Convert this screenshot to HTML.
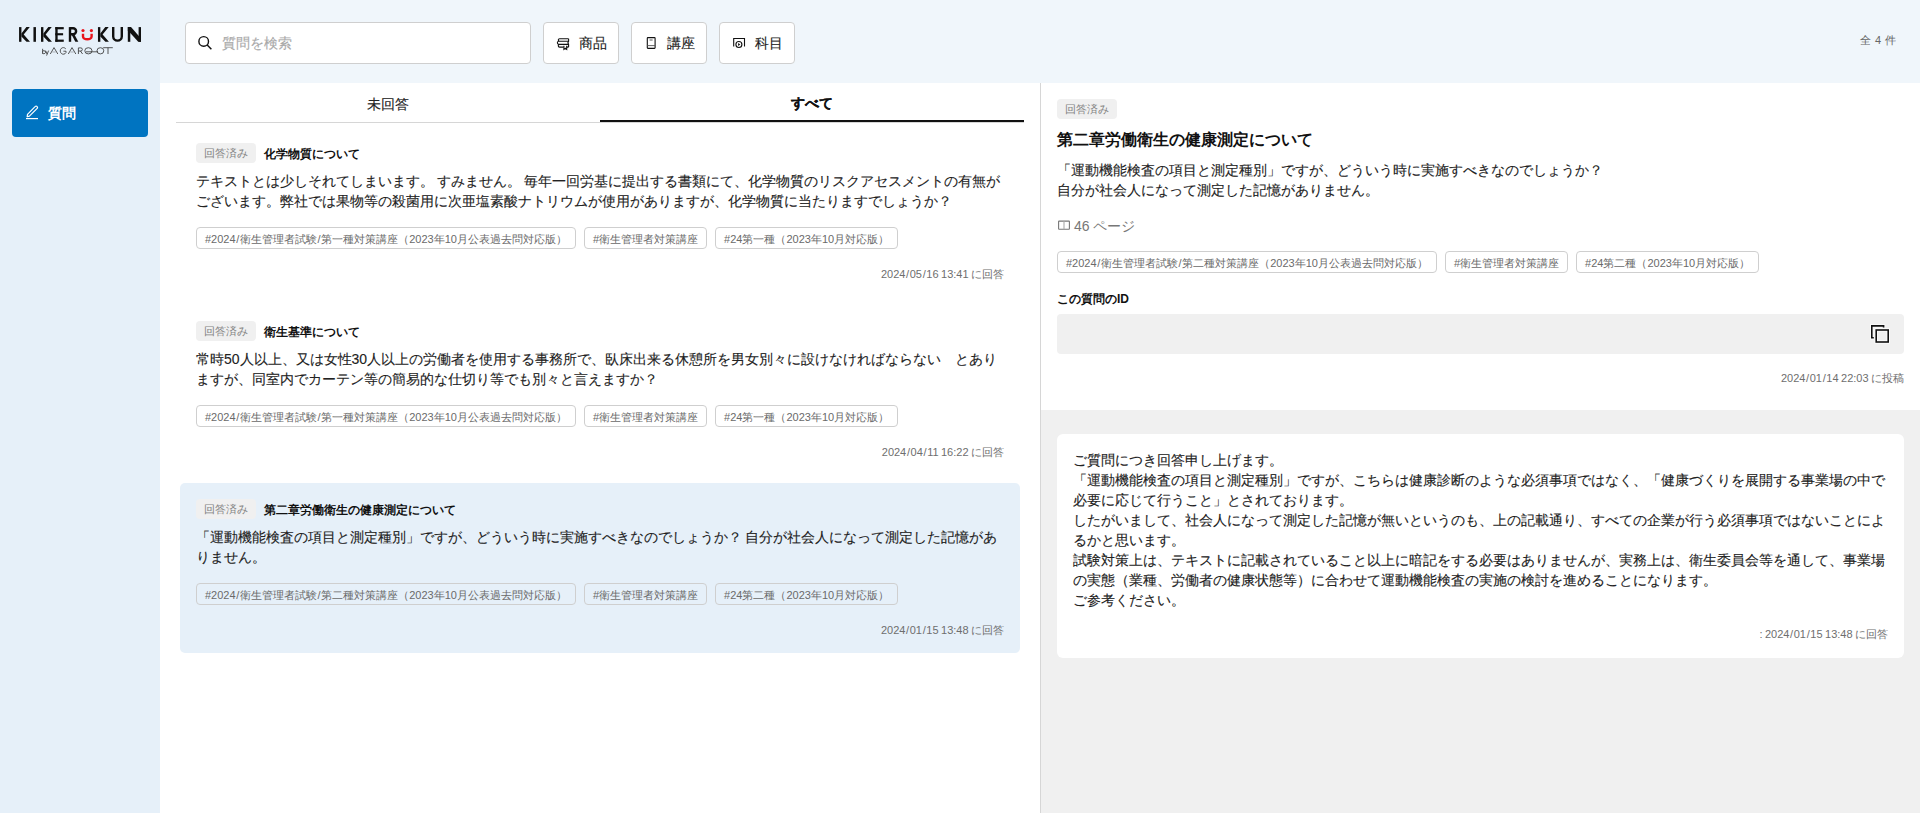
<!DOCTYPE html>
<html lang="ja">
<head>
<meta charset="utf-8">
<style>
*{box-sizing:border-box;margin:0;padding:0;word-spacing:-0.054em}
.s{font-style:normal;margin:0 0.057em}
html,body{width:1920px;height:813px;overflow:hidden;background:#fff}
body{font-family:"Liberation Sans",sans-serif;color:#222;position:relative}
.side{position:absolute;left:0;top:0;width:160px;height:813px;background:#e6f0f9}
.logo{position:absolute;left:15px;top:22px;width:130px;height:36px}
.navbtn{position:absolute;left:12px;top:89px;width:136px;height:48px;background:#0074c1;border-radius:4px;color:#fff}
.navbtn svg{position:absolute;left:24px;top:104px}
.navbtn .t{position:absolute;left:36px;top:14px;font-size:14px;font-weight:bold;line-height:20px}
.head{position:absolute;left:160px;top:0;width:1760px;height:83px;background:#f0f6fb}
.search{position:absolute;left:25px;top:22px;width:346px;height:42px;background:#fff;border:1px solid #cfcfcf;border-radius:4px}
.search svg{position:absolute;left:12px;top:13px}
.search .ph{position:absolute;left:36px;top:10px;font-size:14px;line-height:20px;color:#a9a9a9}
.fbtn{position:absolute;top:22px;height:42px;width:76px;background:#fff;border:1px solid #cfcfcf;border-radius:4px}
.fbtn svg{position:absolute;left:13px;top:15px}
.fbtn .t{position:absolute;left:35px;top:10px;font-size:14px;line-height:20px;color:#222}
.count{position:absolute;right:23px;top:32px;font-size:11px;line-height:16px;color:#666;letter-spacing:0.8px}
.left{position:absolute;left:160px;top:83px;width:880px;height:730px;background:#fff}
.tabs{position:absolute;left:16px;top:0;width:848px;height:40px;border-bottom:1px solid #d6d6d6}
.tab{position:absolute;top:0;width:424px;height:39px;text-align:center;font-size:14px;line-height:20px;padding-top:11px;color:#222}
.tab.on{font-weight:bold;color:#111;padding-top:10px}
.tab.on:after{content:"";position:absolute;left:0;right:0;bottom:0;height:2px;background:#111}
.item{position:absolute;left:20px;width:840px;height:170px;border-radius:5px;padding:16px}
.item.sel{background:#e6f0f9}
.row{display:flex;align-items:center;height:20px}
.badge{display:inline-block;height:20px;line-height:20px;padding:0 8px;background:#f0f0f0;border-radius:4px;font-size:11px;color:#828282}
.ttl{position:relative;top:1px;margin-left:8px;font-size:12px;font-weight:bold;line-height:20px;color:#111}
.body{margin-top:8px;font-size:14px;line-height:20px;color:#222}
.tags{margin-top:16px;display:flex;gap:8px;height:22px}
.tag{height:22px;line-height:18px;padding-top:2px !important;border:1px solid #cfcfcf;border-radius:4px;padding:0 8px;font-size:11px;color:#6a6a6a;white-space:nowrap}
.date{margin-top:18px;text-align:right;font-size:11px;line-height:15px;color:#6e6e6e}
.right{position:absolute;left:1040px;top:83px;width:880px;height:730px;background:#f0f0f0;border-left:1px solid #d6d6d6}
.qa{position:absolute;left:0;top:0;width:879px;height:327px;background:#fff;padding:16px}
.rttl{margin-top:9px;font-size:16px;font-weight:bold;line-height:24px;color:#111}
.rbody{margin-top:8px;font-size:14px;line-height:20px;color:#222}
.page{margin-top:16px;padding-left:17px;font-size:14px;line-height:20px;color:#777;display:flex;align-items:center;gap:5px}
.rtags{margin-top:15px;display:flex;gap:8px;height:22px}
.idl{margin-top:17px;font-size:12px;font-weight:bold;line-height:18px;color:#111}
.idbox{margin-top:6px;height:40px;background:#f0f0f0;border-radius:4px;position:relative}
.idbox svg{position:absolute;right:14px;top:11px}
.rdate{margin-top:17px;text-align:right;font-size:11px;line-height:15px;color:#6e6e6e}
.ans{position:absolute;left:16px;top:351px;width:847px;height:224px;background:#fff;border-radius:6px;padding:16px}
.atext{margin-top:0px;font-size:14px;line-height:20px;color:#222}
.ov{position:absolute;left:0;top:0;z-index:10}
.body,.rbody,.atext,.tab,.fbtn .t,.search .ph{-webkit-text-stroke:0.12px currentColor}
.adate{margin-top:17px;text-align:right;font-size:11px;line-height:15px;color:#6e6e6e}
</style>
</head>
<body>
<div class="side">
    <div class="navbtn"><span class="t">質問</span></div>
</div>
<div class="head">
  <div class="search"><span class="ph">質問を検索</span></div>
  <div class="fbtn" style="left:383px"><span class="t">商品</span></div>
  <div class="fbtn" style="left:471px"><span class="t">講座</span></div>
  <div class="fbtn" style="left:559px"><span class="t">科目</span></div>
  <div class="count">全 4 件</div>
</div>
<div class="left">
  <div class="tabs">
    <div class="tab" style="left:0">未回答</div>
    <div class="tab on" style="left:424px">すべて</div>
  </div>
  <div class="item" style="top:44px">
    <div class="row"><span class="badge">回答済み</span><span class="ttl">化学物質について</span></div>
    <div class="body">テキストとは少しそれてしまいます。 すみません。 毎年一回労基に提出する書類にて、化学物質のリスクアセスメントの有無がございます。弊社では果物等の殺菌用に次亜塩素酸ナトリウムが使用がありますが、化学物質に当たりますでしょうか？</div>
    <div class="tags"><span class="tag">#2024<i class="s">/</i>衛生管理者試験<i class="s">/</i>第一種対策講座（2023年10月公表過去問対応版）</span><span class="tag">#衛生管理者対策講座</span><span class="tag">#24第一種（2023年10月対応版）</span></div>
    <div class="date">2024<i class="s">/</i>05<i class="s">/</i>16 13:41 に回答</div>
  </div>
  <div class="item" style="top:222px">
    <div class="row"><span class="badge">回答済み</span><span class="ttl">衛生基準について</span></div>
    <div class="body">常時50人以上、又は女性30人以上の労働者を使用する事務所で、臥床出来る休憩所を男女別々に設けなければならない　とありますが、同室内でカーテン等の簡易的な仕切り等でも別々と言えますか？</div>
    <div class="tags"><span class="tag">#2024<i class="s">/</i>衛生管理者試験<i class="s">/</i>第一種対策講座（2023年10月公表過去問対応版）</span><span class="tag">#衛生管理者対策講座</span><span class="tag">#24第一種（2023年10月対応版）</span></div>
    <div class="date">2024<i class="s">/</i>04<i class="s">/</i>11 16:22 に回答</div>
  </div>
  <div class="item sel" style="top:400px">
    <div class="row"><span class="badge">回答済み</span><span class="ttl">第二章労働衛生の健康測定について</span></div>
    <div class="body">「運動機能検査の項目と測定種別」ですが、どういう時に実施すべきなのでしょうか？ 自分が社会人になって測定した記憶がありません。</div>
    <div class="tags"><span class="tag">#2024<i class="s">/</i>衛生管理者試験<i class="s">/</i>第二種対策講座（2023年10月公表過去問対応版）</span><span class="tag">#衛生管理者対策講座</span><span class="tag">#24第二種（2023年10月対応版）</span></div>
    <div class="date">2024<i class="s">/</i>01<i class="s">/</i>15 13:48 に回答</div>
  </div>
</div>
<div class="right">
  <div class="qa">
    <div class="row"><span class="badge">回答済み</span></div>
    <div class="rttl">第二章労働衛生の健康測定について</div>
    <div class="rbody">「運動機能検査の項目と測定種別」ですが、どういう時に実施すべきなのでしょうか？<br>自分が社会人になって測定した記憶がありません。</div>
    <div class="page"><span>46 ページ</span></div>
    <div class="rtags"><span class="tag">#2024<i class="s">/</i>衛生管理者試験<i class="s">/</i>第二種対策講座（2023年10月公表過去問対応版）</span><span class="tag">#衛生管理者対策講座</span><span class="tag">#24第二種（2023年10月対応版）</span></div>
    <div class="idl">この質問のID</div>
    <div class="idbox"></div>
    <div class="rdate">2024<i class="s">/</i>01<i class="s">/</i>14 22:03 に投稿</div>
  </div>
  <div class="ans">
    <div class="atext">ご質問につき回答申し上げます。<br>「運動機能検査の項目と測定種別」ですが、こちらは健康診断のような必須事項ではなく、「健康づくりを展開する事業場の中で必要に応じて行うこと」とされております。<br>したがいまして、社会人になって測定した記憶が無いというのも、上の記載通り、すべての企業が行う必須事項ではないことによるかと思います。<br>試験対策上は、テキストに記載されていること以上に暗記をする必要はありませんが、実務上は、衛生委員会等を通して、事業場の実態（業種、労働者の健康状態等）に合わせて運動機能検査の実施の検討を進めることになります。<br>ご参考ください。</div>
    <div class="adate">: 2024<i class="s">/</i>01<i class="s">/</i>15 13:48 に回答</div>
  </div>
</div>
<svg class="ov" width="1920" height="813" viewBox="0 0 1920 813">
<g fill="#111">
<rect x="19.06" y="27.1" width="2.37" height="14.7"/>
<path d="M21.4 33.4 L26.4 27.1 L29.8 27.1 L23.7 34.6 L30 41.8 L26.5 41.8 L21.4 36.6 Z"/>
<rect x="33.45" y="27.1" width="2.5" height="14.7"/>
<g transform="translate(21.95 0)"><rect x="19.06" y="27.1" width="2.37" height="14.7"/><path d="M21.4 33.4 L26.4 27.1 L29.8 27.1 L23.7 34.6 L30 41.8 L26.5 41.8 L21.4 36.6 Z"/></g>
<rect x="55.3" y="27.1" width="2.35" height="14.7"/>
<rect x="55.3" y="27.1" width="8.45" height="2.2"/>
<rect x="55.3" y="33.2" width="7.8" height="2.1"/>
<rect x="55.3" y="39.6" width="8.45" height="2.2"/>
<rect x="68.8" y="27.1" width="2.4" height="14.7"/>
<path d="M71.8 35.0 L74.7 35.0 L78.3 41.8 L75.3 41.8 Z"/>
<g transform="translate(78.9 0)"><rect x="19.06" y="27.1" width="2.37" height="14.7"/><path d="M21.4 33.4 L26.4 27.1 L29.8 27.1 L23.7 34.6 L30 41.8 L26.5 41.8 L21.4 36.6 Z"/></g>
<rect x="127.8" y="27.1" width="2.5" height="14.7"/>
<rect x="138.6" y="27.1" width="2.4" height="14.7"/>
<path d="M127.8 27.1 L131 27.1 L141 38.4 L141 41.8 L138.2 41.8 L127.8 30.3 Z"/>
</g>
<g fill="none" stroke="#111" stroke-width="2.4">
<path d="M70 28.3 H73.1 A3 3 0 0 1 73.1 34.3 H70"/>
<path d="M113.2 27.1 V36.5 A4.3 4.1 0 0 0 121.8 36.5 V27.1"/>
</g>
<g fill="#e8141c"><circle cx="83" cy="30.5" r="1.6"/><circle cx="91.4" cy="30.6" r="1.6"/></g>
<path d="M83 33.8 V36.4 A4.3 2.9 0 0 0 91.6 36.4 V33.8" fill="none" stroke="#e8141c" stroke-width="2.4"/>
<g fill="none" stroke="#3a3a3a" stroke-width="0.85">
<path d="M42.6 48.8 V53.9 M42.6 51.8 A1.5 1.5 0 1 1 42.6 52.6"/>
<path d="M45.6 50.6 L47 54 M48.6 50.6 L46.6 55.6"/>
<path d="M50.3 54 L54 47.6 L57.8 54"/>
<path d="M65.8 48.9 A3.1 3.3 0 1 0 66 52.6 V51.2 H63.4"/>
<path d="M68.3 54 L72 47.6 L75.8 54"/>
<path d="M78.4 54 V47.9 H80.8 A1.55 1.55 0 0 1 80.8 51 H78.4 M80.4 51 L82.6 54"/>
<ellipse cx="88.4" cy="50.8" rx="3.6" ry="3.1"/>
<ellipse cx="100.4" cy="50.8" rx="3.4" ry="3.1"/>
<path d="M86 51.8 H98 M103.2 47.7 H112.8 M108 47.7 V54"/>
<path d="M52.4 52 H55.6 M70.4 52 H73.6" stroke-width="0.7" opacity="0.5"/>
</g>
<g fill="none" stroke="#fff" stroke-width="1.2" stroke-linejoin="round">
<path d="M27.2 116.8 L27.5 114.3 L35.3 106.4 A1.1 1.1 0 0 1 36.9 106.4 L37.2 106.7 A1.1 1.1 0 0 1 37.2 108.3 L29.4 116.1 Z"/>
<path d="M26 118.6 H38"/>
</g>
<g fill="none" stroke="#111" stroke-width="1.4">
<circle cx="203.7" cy="41.4" r="4.8"/>
<path d="M207.2 44.9 L211.4 49.3"/>
</g>
<g fill="none" stroke="#111" stroke-width="1.1">
<path d="M568.6 38.7 H559.6 A1.3 1.3 0 0 0 559.6 41.3 H568.3 M567.9 41.3 H558.9 A1.55 1.55 0 0 0 558.9 44.4 H568.3 M568.6 44.4 H559.6 A1.35 1.35 0 0 0 559.6 47.1 H563.6 M566.8 47.1 H568.6 M568.6 38.7 V41.3 L567.9 42.85 L568.6 44.4 V47.1"/>
<path d="M563.9 45.8 V49.4 L565.3 48.3 L566.7 49.4 V45.8"/>
<rect x="647.3" y="37.6" width="7.8" height="10.8" rx="0.6"/>
<path d="M647.3 45.6 H655.1" stroke="#555" stroke-width="0.9"/>
<path d="M649.6 40 H652.6" stroke="#666"/>
<path d="M733.7 46.6 V38.5 H744.5 V46.6"/>
<circle cx="738.9" cy="44.5" r="3"/>
</g>
<path d="M738.1 43 L740.3 44.4 L738.1 45.9 Z" fill="#111"/>
<g fill="none" stroke="#777" stroke-width="1.1">
<rect x="1058.6" y="221.1" width="10.8" height="8.2" rx="0.5"/>
<path d="M1064 221.1 V229.3" stroke="#aaa"/>
</g>
<g fill="none" stroke-width="1.6">
<path d="M1883.6 327.6 V325.9 H1871.8 V337.7 H1873.8" stroke="#fff" stroke-width="3.4" opacity="0.8"/>
<rect x="1876.2" y="330" width="12" height="12" stroke="#fff" stroke-width="3.4" opacity="0.8"/>
<path d="M1883.6 327.6 V325.9 H1871.8 V337.7 H1873.8" stroke="#111"/>
<rect x="1876.2" y="330" width="12" height="12" stroke="#111"/>
</g>
</svg>
</body>
</html>
